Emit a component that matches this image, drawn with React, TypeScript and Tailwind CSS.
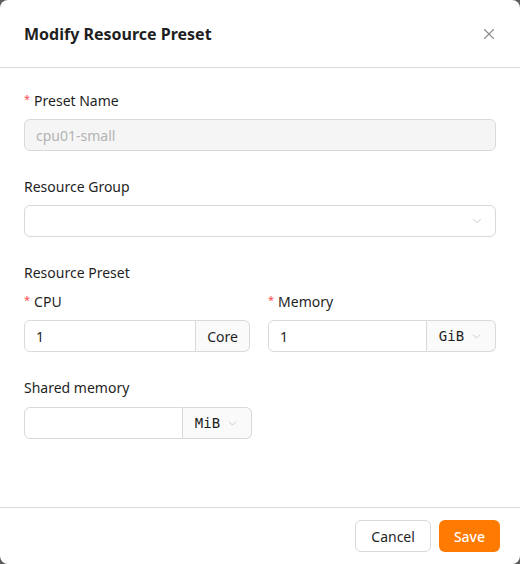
import { X, ChevronDown } from 'lucide-react';

const font = { fontFamily: '"Noto Sans", "Open Sans", sans-serif' };

function Label({ text, required }: { text: string; required?: boolean }) {
  return (
    <div className="flex items-center h-[22px] text-[14px] text-[#1f1f1f] mb-[8px]">
      {required && <span className="text-[#ff4d4f] mr-[4px] text-[11px] leading-none relative top-[-2px]">*</span>}
      {text}
    </div>
  );
}

function UnitInput({ value, unit, select, width, inputWidth }: { value: string; unit: string; select?: boolean; width: string; inputWidth: string }) {
  return (
    <div className={`flex h-[32px] ${width}`}>
      <div className={`${inputWidth} border border-[#d9d9d9] rounded-l-[6px] flex items-center px-[11px] text-[14px] text-[#1f1f1f]`}>
        {value}
      </div>
      <div className="flex-1 border border-l-0 border-[#d9d9d9] rounded-r-[6px] bg-[#fafafa] flex items-center justify-center gap-[6px] text-[14px] text-[#1f1f1f]">
        <span className={select ? 'font-["DejaVu_Sans_Mono",monospace] text-[14px]' : ''}>{unit}</span>
        {select && <ChevronDown className="w-[13px] h-[13px] text-[#bfbfbf]" strokeWidth={1.5} />}
      </div>
    </div>
  );
}

export default function App() {
  return (
    <div className="w-[520px] h-[564px] bg-[#5c5c5c]" style={font}>
      <div className="w-full h-full bg-white rounded-[8px] flex flex-col">
        <div className="h-[68px] flex items-center justify-between pl-[24px] pr-[22px] border-b border-[#d9d9d9]">
          <h1 className="text-[16px] font-bold text-[#1f1f1f]">Modify Resource Preset</h1>
          <X className="w-[18px] h-[18px] text-[#8c8c8c]" strokeWidth={1.5} />
        </div>

        <div className="flex-1 px-[24px] pt-[21px]">
          <Label text="Preset Name" required />
          <div className="h-[32px] rounded-[6px] border border-[#d9d9d9] bg-[#f5f5f5] flex items-center px-[11px] text-[14px] text-[#b3b3b3]">
            cpu01-small
          </div>

          <div className="mt-[24px]">
            <Label text="Resource Group" />
            <div className="h-[32px] rounded-[6px] border border-[#d9d9d9] flex items-center justify-end px-[11px]">
              <ChevronDown className="w-[14px] h-[14px] text-[#bfbfbf]" strokeWidth={1.5} />
            </div>
          </div>

          <div className="mt-[24px]">
            <div className="h-[22px] flex items-center text-[14px] text-[#1f1f1f] mb-[7px]">Resource Preset</div>
            <div className="grid grid-cols-[228px_228px] gap-[16px]">
              <div>
                <Label text="CPU" required />
                <UnitInput value="1" unit="Core" width="w-[226px]" inputWidth="w-[172px]" />
              </div>
              <div>
                <Label text="Memory" required />
                <UnitInput value="1" unit="GiB" select width="w-[228px]" inputWidth="w-[159px]" />
              </div>
            </div>
          </div>

          <div className="mt-[24px]">
            <div className="flex items-center h-[22px] text-[14px] text-[#1f1f1f] mb-[9px]">Shared memory</div>
            <UnitInput value="" unit="MiB" select width="w-[228px]" inputWidth="w-[159px]" />
          </div>
        </div>

        <div className="h-[57px] border-t border-[#d9d9d9] flex items-start justify-end gap-[8px] pt-[12px] pr-[20px]">
          <button className="h-[32px] px-[15px] rounded-[6px] border border-[#d9d9d9] bg-white text-[14px] text-[#1f1f1f]">
            Cancel
          </button>
          <button className="h-[32px] px-[15px] rounded-[6px] bg-[#ff7a00] text-[14px] text-white font-medium">
            Save
          </button>
        </div>
      </div>
    </div>
  );
}
